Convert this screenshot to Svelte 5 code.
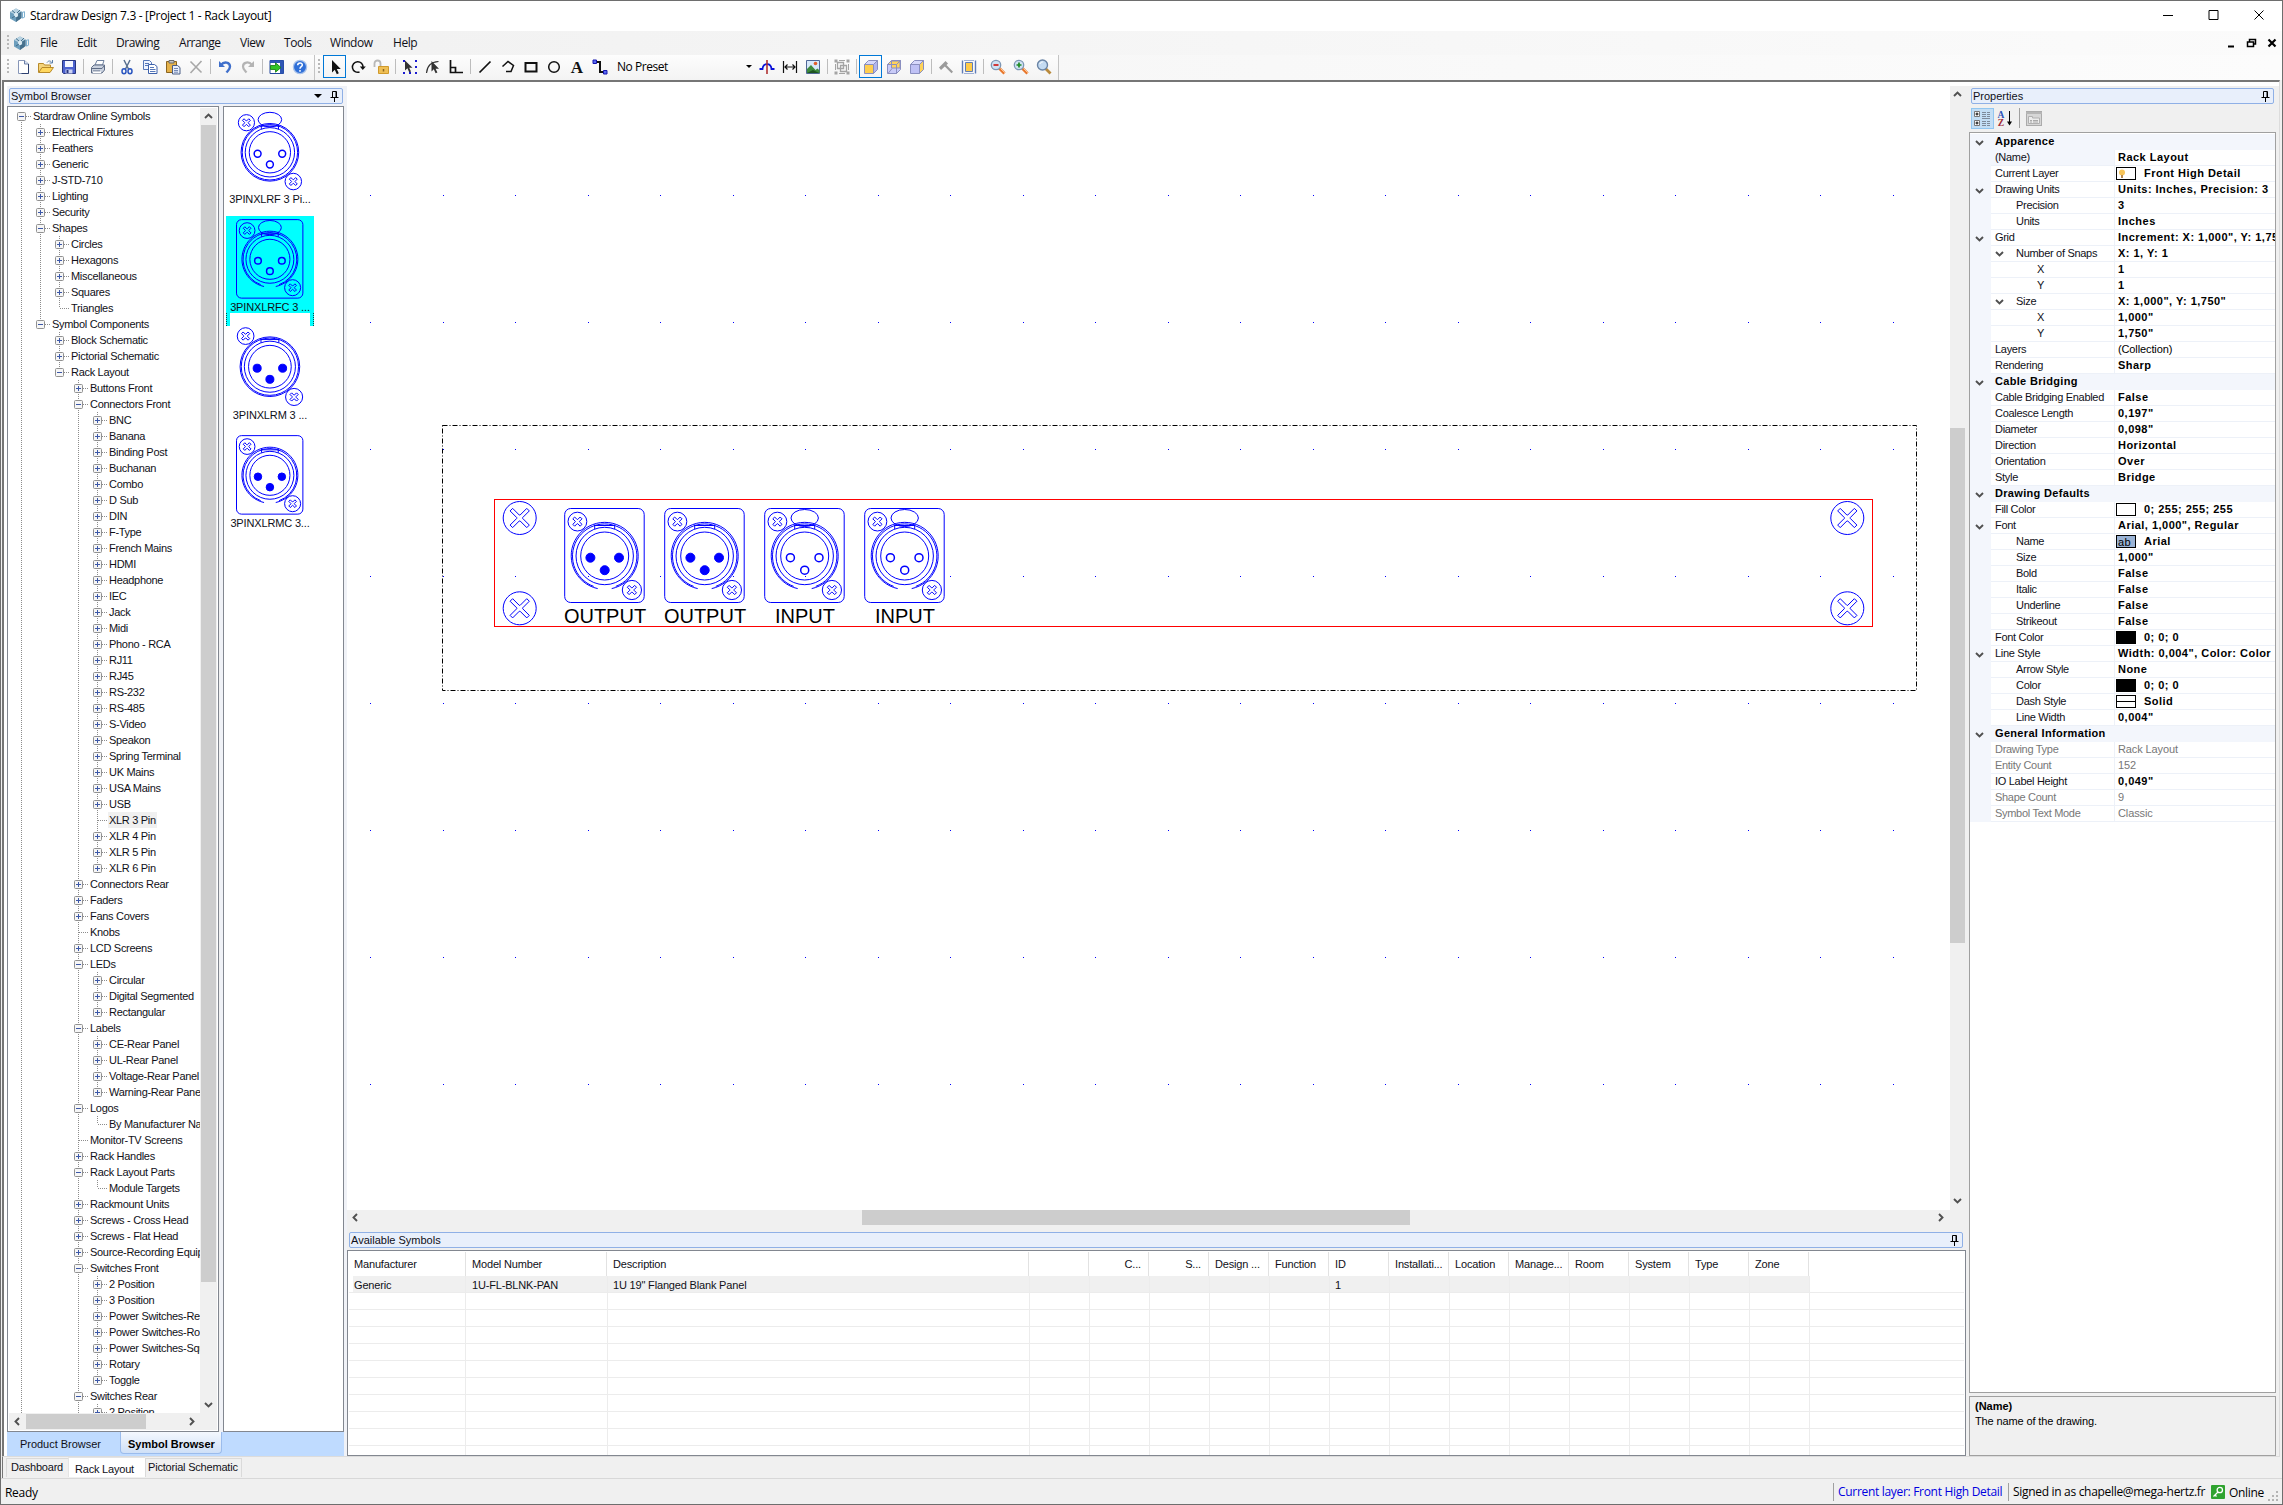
<script>
  // Tree source: leading digit is the depth, then the state (+ collapsed, - expanded, . leaf)
  const treeSource = `0-Stardraw Online Symbols
1+Electrical Fixtures
1+Feathers
1+Generic
1+J-STD-710
1+Lighting
1+Security
1-Shapes
2+Circles
2+Hexagons
2+Miscellaneous
2+Squares
2.Triangles
1-Symbol Components
2+Block Schematic
2+Pictorial Schematic
2-Rack Layout
3+Buttons Front
3-Connectors Front
4+BNC
4+Banana
4+Binding Post
4+Buchanan
4+Combo
4+D Sub
4+DIN
4+F-Type
4+French Mains
4+HDMI
4+Headphone
4+IEC
4+Jack
4+Midi
4+Phono - RCA
4+RJ11
4+RJ45
4+RS-232
4+RS-485
4+S-Video
4+Speakon
4+Spring Terminal
4+UK Mains
4+USA Mains
4+USB
4.XLR 3 Pin
4+XLR 4 Pin
4+XLR 5 Pin
4+XLR 6 Pin
3+Connectors Rear
3+Faders
3+Fans Covers
3.Knobs
3+LCD Screens
3-LEDs
4+Circular
4+Digital Segmented
4+Rectangular
3-Labels
4+CE-Rear Panel
4+UL-Rear Panel
4+Voltage-Rear Panel
4+Warning-Rear Panel
3-Logos
4.By Manufacturer Name
3.Monitor-TV Screens
3+Rack Handles
3-Rack Layout Parts
4.Module Targets
3+Rackmount Units
3+Screws - Cross Head
3+Screws - Flat Head
3+Source-Recording Equipment
3-Switches Front
4+2 Position
4+3 Position
4+Power Switches-Rectangular
4+Power Switches-Round
4+Power Switches-Square
4+Rotary
4+Toggle
3-Switches Rear
4+2 Position`;

  const parsed = treeSource.split('\n').map((s) => ({ depth: +s[0], state: s[1], label: s.slice(2) }));
  // Levels whose branches go on below the visible part of the tree
  const openEnded = [0, 3];

  function hasNext(i, level) {
    for (let j = i + 1; j < parsed.length; j++) {
      if (parsed[j].depth < level) return false;
      if (parsed[j].depth === level) return true;
    }
    return openEnded.includes(level);
  }

  const tree = parsed.map((row, i) => {
    const guides = [];
    for (let l = 0; l <= row.depth; l++) {
      const more = hasNext(i, l);
      if (l < row.depth) guides.push(more ? 'full' : 'none');
      else if (i === 0) guides.push('lower');
      else guides.push(more ? 'full' : 'upper');
    }
    return { ...row, guides };
  });

  const menus = [
    ['File', 37], ['Edit', 39], ['Drawing', 63], ['Arrange', 61], ['View', 44], ['Tools', 46], ['Window', 63], ['Help', 40]
  ];

  const standardTools = ['new', 'open', 'save', '|', 'print', '|', 'cut', 'copy', 'paste', 'delete', '|', 'undo', 'redo', '|', 'go', 'help'];
  const drawTools = ['cursor', 'rotate', 'lock', '|', 'marquee', 'node', 'angle', '|', 'line', 'poly', 'rect', 'circle', 'text', 'connector'];
  const viewTools = ['bridge', 'dimension', 'image', '|', 'group', '|', 'cubeFront', 'cubeMid', 'cubeRear', '|', 'hammer', 'frame', '|', 'zoomOut', 'zoomIn', 'zoom'];
  const active = ['cursor', 'cubeFront'];

  const lens = '<path d="M9 9 14.500 14.500" stroke="#e8762c" stroke-width="3"/><path d="M10.500 9.500 14.800 13.800" stroke="#ffd0a0" stroke-width=".9"/><circle cx="6" cy="6" r="4.700" fill="#cfe2f4" stroke="#7d97b5" stroke-width="1.300"/>';
  const cube = (front, top, side) =>
    `<path d="M1.500 5.500h9v9h-9z" fill="${front}" stroke="#8a8fc0"/><path d="M1.500 5.500 5.500 1.500h9l-4 4z" fill="${top}" stroke="#8a8fc0"/><path d="M10.500 5.500l4-4v9l-4 4z" fill="${side}" stroke="#8a8fc0"/>`;

  const icons = {
    app: '<path d="M1 5 7 1.500 12.500 4.500V11L7 15 1 11.500z" fill="#6c9ebd"/><path d="M1 5 7 1.500 12.500 4.500 7 8z" fill="#b9d3e2"/><path d="M7 8 12.500 4.500V11L7 15z" fill="#47728e"/><circle cx="7" cy="8" r="2.200" fill="#dcebf3"/><path d="M3 3.500 6 6M11 3l-3 3M3 11l3-2M8 10l3 2" stroke="#3a6783" stroke-width=".9"/><path d="M13.500 5v6M13 5.500l2.500-.8v5.500l-2.200 1" stroke="#7fb2d2" fill="none"/>',
    new: '<path d="M3.500 1.500h6l4 3.500v9.500h-10z" fill="#fff" stroke="#8796b8"/><path d="M9.500 1.500v3.500h4" fill="#dbe4f4" stroke="#6b7fa6"/><path d="M13.500 5v9.500h-7" fill="none" stroke="#2d4070"/>',
    open: '<path d="M.5 13.500V4.500h5l1 1.500h6v3" fill="#f4d47c" stroke="#b88a2a"/><path d="M.8 13.500 4 8.500h11.500l-3.500 5z" fill="#ffd75e" stroke="#b88a2a"/><path d="M9 3.500c1.500-2 3.500-2 4.800 0M14.500 1v3h-3" fill="none" stroke="#5b7fa8"/>',
    save: '<path d="M1.500 1.500h13v13h-12l-1-1z" fill="#4c62cf" stroke="#27357f"/><path d="M4 2h8v6H4z" fill="#f4f6ff"/><path d="M4.500 10.500h7v4h-7z" fill="#ccd3f3"/><path d="M5.500 11h2v3h-2z" fill="#27357f"/>',
    print: '<path d="M5 6 7 1.500h7L12.500 6z" fill="#fff" stroke="#6f82a0"/><path d="M1.500 8.500 4 6h10.500v5l-2.500 3h-10.500z" fill="#c9d1de" stroke="#5e6c86"/><path d="M1.500 9.500h10.500l2-2.500M3 12h7" fill="none" stroke="#5e6c86"/><path d="M3 12.500h8v1.500H3z" fill="#fff"/>',
    cut: '<path d="M5 1 9.500 10M11 1 6.500 10" stroke="#59708f" stroke-width="1.500"/><ellipse cx="5" cy="12.300" rx="2" ry="2.500" fill="none" stroke="#2a56c0" stroke-width="1.500"/><ellipse cx="11" cy="12.300" rx="2" ry="2.500" fill="none" stroke="#2a56c0" stroke-width="1.500"/>',
    copy: '<path d="M1.500 1.500h6l2 2v7h-8z" fill="#eef4ff" stroke="#5677b8"/><path d="M3 4.500h4M3 6.500h4" stroke="#5677b8"/><path d="M6.500 5.500h6l2.500 2v7h-8.500z" fill="#fff" stroke="#3d61ab"/><path d="M8 8.500h4M8 10.500h5.500M8 12.500h5.500" stroke="#5677b8"/>',
    paste: '<path d="M1.500 2.500h10v11h-10z" fill="#e5b24a" stroke="#8a6420"/><path d="M4 1.500h5v2.500H4z" fill="#c7c7c7" stroke="#6b6b6b"/><path d="M7.500 6.500h5l2.500 2v6.500H7.500z" fill="#e8effc" stroke="#4b5e86"/><path d="M9 9.500h4M9 11.500h4M9 13.200h4" stroke="#7589b5"/>',
    delete: '<path d="M2.500 2.500l11 11M13.500 2 2.500 14" stroke="#a8a8a8" stroke-width="1.600"/>',
    undo: '<path d="M2 2v6h6z" fill="#3f6fcb"/><path d="M4 6c3-4 9-3 9 1.500 0 3-2 4-3.500 6" fill="none" stroke="#3f6fcb" stroke-width="2.400"/>',
    redo: '<path d="M14 2v6H8z" fill="#b4b4b4"/><path d="M12 6C9 2 3 3 3 7.500c0 3 2 4 3.500 6" fill="none" stroke="#b4b4b4" stroke-width="2.200"/>',
    go: '<path d="M1 1.500h13.500v13H1z" fill="#fff" stroke="#23479c"/><path d="M1 1.500h13.500v2.500H1zM11 4h3.500v10.500H11z" fill="#2f56b5"/><path d="M1.500 6.500h5V3.800l5.500 4.700-5.500 4.700v-2.700h-5z" fill="#2fc322" stroke="#11780b" stroke-width=".8"/>',
    help: '<circle cx="8" cy="8" r="6.600" fill="#2f6fd8" stroke="#a9c2ea" stroke-width="1.300"/><path d="M5.700 6.200c0-3 4.800-3 4.600-.1-.1 1.600-2.300 1.600-2.300 3.600M8 11v1.700" fill="none" stroke="#fff" stroke-width="1.500"/>',
    cursor: '<path d="M5 1v12.500l2.800-2.800 2 4.500 2-1-2-4.200h4z" fill="#111"/>',
    rotate: '<path d="M13 8.500A5.300 5.300 0 1 0 9.500 13" fill="none" stroke="#111" stroke-width="1.500"/><path d="M9.800 7.500h6l-3 3.500z" fill="#111"/>',
    lock: '<path d="M1.500 8V4.500c0-4 6-4 6 0V8" fill="none" stroke="#b8b8b8" stroke-width="1.800"/><path d="M5.500 7.500h10v7h-10z" fill="#efbf55" stroke="#d09a2c"/><path d="M10.500 10v2.500" stroke="#8a6420" stroke-width="1.500"/>',
    marquee: '<path d="M3 1.500v10l2.400-2.200 1.800 4 1.800-.8-1.800-3.800h3.300z" fill="#333"/><path d="M1 1h2v2H1zM1 13h2v2H1zM13 1h2v2h-2zM13 13h2v2h-2zM13 7h2v2h-2zM7 13h2v2H7z" fill="#1a1ad0"/>',
    node: '<path d="M1.500 14C2 8 5 3 13.500 2.500" fill="none" stroke="#333" stroke-width="1.200"/><path d="M6.500 2v10.500l2.300-2.200 1.800 4 1.800-.8-1.800-3.800h3.400z" fill="#333"/>',
    angle: '<path d="M2.500 1v12.500h12.500M2.500 8.500h5v5" fill="none" stroke="#111" stroke-width="1.700"/>',
    line: '<path d="M2.500 13.500l11-11" stroke="#111" stroke-width="1.700"/>',
    poly: '<path d="M2.500 7.500 8 2.500l5.500 4L11 12.500H6" fill="none" stroke="#111" stroke-width="1.500"/>',
    rect: '<path d="M2.500 4h11v8.500h-11z" fill="none" stroke="#111" stroke-width="2"/>',
    circle: '<circle cx="8" cy="8" r="5.300" fill="none" stroke="#111" stroke-width="1.500"/>',
    text: '<text x="8" y="13.500" text-anchor="middle" font-family="Liberation Serif, serif" font-weight="700" font-size="17" letter-spacing="0" fill="#111">A</text>',
    connector: '<path d="M3 3h5v10h5" fill="none" stroke="#111" stroke-width="2"/><path d="M1 1h3.500v3.500H1zM11.500 11.500H15V15h-3.500z" fill="#5a6cf0" stroke="#1414b0"/>',
    bridge: '<path d="M.5 10h3C4 3.500 12 3.500 12.500 10h3" fill="none" stroke="#0a10d8" stroke-width="1.800"/><path d="M8 1v14" stroke="#b03030" stroke-width="1.600"/>',
    dimension: '<path d="M1.500 2v12M14.500 2v12M3 8h10M5.500 5.500 3 8l2.500 2.500M10.500 5.500 13 8l-2.500 2.500" fill="none" stroke="#111" stroke-width="1.200"/>',
    image: '<path d="M1.500 1.500h13v13h-13z" fill="#d7e8fa" stroke="#4f6796"/><path d="M2 14V10l4-4 4.500 5 2-1.500 2 2V14z" fill="#3d8a3d"/><circle cx="10.500" cy="4.500" r="1.800" fill="#e0602c"/><path d="M2 14l6-3 6 3z" fill="#1d5320"/>',
    group: '<path d="M3.500 3.500h6v6h-6zM6.500 6.500h6v6h-6z" fill="none" stroke="#a4a4a4" stroke-width="1.300"/><path d="M.5.500h3v3h-3zM12.500.500h3v3h-3zM.5 12.500h3v3h-3zM12.500 12.500h3v3h-3z" fill="#a4a4a4"/><path d="M5 1.500h6M5 14.500h6M1.500 5v6M14.500 5v6" stroke="#a4a4a4"/>',
    cubeFront: cube('#ffce4f', '#d7d8fb', '#b3b5ee'),
    cubeMid: cube('#c9cbf8', '#ffd764', '#c9cbf8') + '<path d="M5.500 2h8.500v7H5.500z" fill="#ffd35a" stroke="#8a8fc0"/><path d="M2 14.500l4-5" stroke="#8a8fc0"/><path d="M1.500 5.500h9v9M10.500 5.500l4-4" fill="none" stroke="#8a8fc0"/>',
    cubeRear: cube('#bfc1f5', '#d7d8fb', '#ffd35a'),
    hammer: '<path d="M1 8.500 7.500 2 10 4.500 8.500 6 15 12.800 13.500 14.300 6.800 7.500 3 11z" fill="#9b9b9b"/>',
    frame: '<path d="M1.500 1.500v13M14.500 1.500v13" stroke="#5f7cb8" stroke-width="1.400"/><path d="M4.500 3.500h7v9h-7z" fill="#ffcb47" stroke="#5f7cb8"/><path d="M3 1.500h10M3 14.500h10" stroke="#9fb0d4"/>',
    zoomOut: lens + '<path d="M3.500 6h5" stroke="#d02525" stroke-width="1.800"/>',
    zoomIn: lens + '<path d="M3.500 6h5M6 3.500v5" stroke="#1e8b22" stroke-width="1.700"/>',
    zoom: '<path d="M9.500 9.500 14.500 14.500" stroke="#b98a3c" stroke-width="2.800"/><circle cx="6.500" cy="6" r="5" fill="#c4dbf2" stroke="#6a84a5" stroke-width="1.400"/><path d="M3.800 5c.5-1.500 1.800-2 3-2" stroke="#fff" fill="none"/>'
  };

  const thumbs = [
    { label: '3PINXLRF 3 Pi...', female: true, plate: false, scale: 0.86, cy: 46.3 },
    { label: '3PINXLRFC 3 ...', female: true, plate: true, scale: 0.835, cy: 45.3, selected: true },
    { label: '3PINXLRM 3 ...', female: false, plate: false, scale: 0.89, cy: 44.7 },
    { label: '3PINXLRMC 3...', female: false, plate: true, scale: 0.835, cy: 45.3 }
  ];

  const connectors = [
    { x: 564.5, label: 'OUTPUT', female: false },
    { x: 664.5, label: 'OUTPUT', female: false },
    { x: 764.5, label: 'INPUT', female: true },
    { x: 864.5, label: 'INPUT', female: true }
  ];

  const dots = [];
  for (let r = 0; r < 8; r++) for (let c = 0; c < 22; c++) dots.push([Math.floor(370.5 + c * 72.5), 195 + r * 127]);

  const screws = [[519.7, 518], [519.7, 608.3], [1847.3, 518], [1847.3, 608.3]];

  const columns = [
    ['Manufacturer', 117, 'Generic'], ['Model Number', 141, '1U-FL-BLNK-PAN'], ['Description', 422, '1U 19" Flanged Blank Panel'],
    ['', 60], ['C...', 60, '', true], ['S...', 60, '', true], ['Design ...', 60], ['Function', 60], ['ID', 60, '1'],
    ['Installati...', 60], ['Location', 60], ['Manage...', 60], ['Room', 60], ['System', 60], ['Type', 60], ['Zone', 60]
  ];

  // [kind, label, value, options]; kind c = category, otherwise the nesting depth
  const props = [
    ['c', 'Apparence'],
    [0, '(Name)', 'Rack Layout', { current: true }],
    [0, 'Current Layer', 'Front High Detail', { swatch: 'bulb' }],
    [0, 'Drawing Units', 'Units: Inches, Precision: 3', { open: true }],
    [1, 'Precision', '3'],
    [1, 'Units', 'Inches'],
    [0, 'Grid', 'Increment: X: 1,000", Y: 1,750"', { open: true }],
    [1, 'Number of Snaps', 'X: 1, Y: 1', { open: true }],
    [2, 'X', '1'],
    [2, 'Y', '1'],
    [1, 'Size', 'X: 1,000", Y: 1,750"', { open: true }],
    [2, 'X', '1,000"'],
    [2, 'Y', '1,750"'],
    [0, 'Layers', '(Collection)', { plain: true }],
    [0, 'Rendering', 'Sharp'],
    ['c', 'Cable Bridging'],
    [0, 'Cable Bridging Enabled', 'False'],
    [0, 'Coalesce Length', '0,197"'],
    [0, 'Diameter', '0,098"'],
    [0, 'Direction', 'Horizontal'],
    [0, 'Orientation', 'Over'],
    [0, 'Style', 'Bridge'],
    ['c', 'Drawing Defaults'],
    [0, 'Fill Color', '0; 255; 255; 255', { swatch: 'white' }],
    [0, 'Font', 'Arial, 1,000", Regular', { open: true }],
    [1, 'Name', 'Arial', { swatch: 'ab' }],
    [1, 'Size', '1,000"'],
    [1, 'Bold', 'False'],
    [1, 'Italic', 'False'],
    [1, 'Underline', 'False'],
    [1, 'Strikeout', 'False'],
    [0, 'Font Color', '0; 0; 0', { swatch: 'black' }],
    [0, 'Line Style', 'Width: 0,004", Color: Color', { open: true }],
    [1, 'Arrow Style', 'None'],
    [1, 'Color', '0; 0; 0', { swatch: 'black' }],
    [1, 'Dash Style', 'Solid', { swatch: 'dash' }],
    [1, 'Line Width', '0,004"'],
    ['c', 'General Information'],
    [0, 'Drawing Type', 'Rack Layout', { muted: true }],
    [0, 'Entity Count', '152', { muted: true }],
    [0, 'IO Label Height', '0,049"'],
    [0, 'Shape Count', '9', { muted: true }],
    [0, 'Symbol Text Mode', 'Classic', { muted: true }]
  ].map(([kind, label, value, o = {}]) => ({ kind, label, value, ...o }));
</script>

{#snippet icon(name)}
  <svg class="icon" viewBox="0 0 16 16" width="16" height="16">{@html icons[name]}</svg>
{/snippet}

{#snippet tools(list)}
  {#each list as name}
    {#if name === '|'}
      <i class="sep"></i>
    {:else}
      <button class="tool" class:active={active.includes(name)} aria-label={name}>{@render icon(name)}</button>
    {/if}
  {/each}
{/snippet}

{#snippet pin()}
  <svg class="pin" viewBox="0 0 9 11" width="9" height="11"><path d="M2.500 6V.500h4V6M.500 6.500h8M4.500 7v4" fill="none" stroke="#000" /><path d="M6 1v5" stroke="#000" /></svg>
{/snippet}

{#snippet chevron(turn)}
  <svg class="chev {turn}" viewBox="0 0 9 9" width="9" height="9"><path d="M1 3 4.500 6.500 8 3" fill="none" stroke="#505050" stroke-width="1.900" /></svg>
{/snippet}

{#snippet screw(x, y, r, arm, w)}
  <g transform="translate({x} {y})">
    <circle {r} />
    <path
      transform="rotate(45)"
      d="M{-w} {-arm}H{w}V{-w * 1.3}L{w * 1.3} {-w}H{arm}V{w}H{w * 1.3}L{w} {w * 1.3}V{arm}H{-w}V{w * 1.3}L{-w * 1.3} {w}H{-arm}V{-w}H{-w * 1.3}L{-w} {-w * 1.3}z"
    />
  </g>
{/snippet}

{#snippet xlr(x, y, scale, female, plate)}
  <g class="xlr" transform="translate({x} {y}) scale({scale})">
    {#if plate}<rect x="-40" y="-47.500" width="79.500" height="94" rx="6" />{/if}
    {@render screw(-27.3, -34.4, 9.4, 5.2, 1.3)}
    {@render screw(27.2, 34, 9.6, 5.2, 1.3)}
    {#if plate}
      <path d="M-7 32.600A33.500 33.500 0 1 1 7 32.600" />
      <path d="M-11 30.400A32.200 32.200 0 1 1 11 30.400" />
    {:else}
      <circle r="33.500" />
      <circle r="32.200" />
    {/if}
    <circle r="28.700" />
    <circle r="24" />
    <path d="M-10-31.500v4.500M10-31.500v4.500M-10-30.500H10" />
    {#if female}
      <ellipse cx="0" cy="-38" rx="13.700" ry="8.500" />
    {/if}
    {#each [[-14.3, 1.7], [14.3, 1.7], [0, 14.2]] as [px, py]}
      <circle class={female ? 'socket' : 'contact'} cx={px} cy={py} r={female ? 4 : 4.5} />
    {/each}
  </g>
{/snippet}

<div class="window">
  <header class="titlebar">
    {@render icon('app')}
    <span class="ui title">Stardraw Design 7.3 - [Project 1 - Rack Layout]</span>
    <svg class="caption" viewBox="0 0 104 12" width="104" height="12">
      <path d="M0 6.500h10M46 1.500h9v9h-9zM91.500 1.500l9 9M100.500 1.500l-9 9" fill="none" stroke="#000" />
    </svg>
  </header>

  <nav class="menubar">
    <i class="grip"></i>
    {@render icon('app')}
    <div class="menus ui">
      {#each menus as [name, width]}
        <span style:width="{width}px">{name}</span>
      {/each}
    </div>
    <svg class="child" viewBox="0 0 50 12" width="50" height="12">
      <path d="M1 9.500h6" stroke="#000" stroke-width="2" />
      <path d="M20.500 5h6v4.500h-6zM22.500 5V2.500h6v4.500h-2" fill="none" stroke="#000" stroke-width="1.500" />
      <path d="M41.500 2.500l7 7M48.500 2.500l-7 7" stroke="#000" stroke-width="2.200" />
    </svg>
  </nav>

  <div class="toolbar">
    <div class="strip">
      <i class="grip"></i>
      {@render tools(standardTools)}
    </div>
    <div class="strip second">
      <i class="grip"></i>
      {@render tools(drawTools)}
      <span class="preset ui">No Preset<i class="drop"></i></span>
      {@render tools(viewTools)}
    </div>
  </div>

  <main class="workspace">
    <aside class="browser">
      <div class="panel-head"><span>Symbol Browser</span><i class="drop big"></i>{@render pin()}</div>
      <div class="panes">
        <div class="tree-box">
          <div class="tree">
            {#each tree as row}
              <div class="node">
                {#each row.guides as g, l}
                  <i class="guide {g}">
                    {#if l === row.depth}
                      <b class="stub"></b>
                      {#if row.state !== '.'}
                        <svg class="box" viewBox="0 0 9 9" width="9" height="9">
                          <rect x=".5" y=".5" width="8" height="8" rx="1" fill="#f6f6f6" stroke="#919191" />
                          <path d={row.state === '+' ? 'M2 4.500h5M4.500 2v5' : 'M2 4.500h5'} stroke="#3c58a8" />
                        </svg>
                      {/if}
                    {/if}
                  </i>
                {/each}
                <span class:chosen={row.label === 'XLR 3 Pin'}>{row.label}</span>
              </div>
            {/each}
          </div>
          <div class="vbar">
            {@render chevron('up')}
            <i class="thumb"></i>
            {@render chevron('down')}
          </div>
          <div class="hbar">
            {@render chevron('left')}
            <i class="thumb"></i>
            {@render chevron('right')}
          </div>
        </div>
        <div class="thumbs">
          {#each thumbs as t}
            <figure class:selected={t.selected}>
              <svg viewBox="0 0 88 84" width="88" height="84">{@render xlr(43.9, t.cy - 2, t.scale, t.female, t.plate)}</svg>
              <figcaption>{t.label}</figcaption>
            </figure>
          {/each}
        </div>
      </div>
      <div class="dock-tabs">
        <span class="dock">Product Browser</span>
        <span class="dock on">Symbol Browser</span>
      </div>
    </aside>

    <section class="center">
      <div class="canvas-row">
        <svg class="canvas" viewBox="347 82 1603 1128" width="1603" height="1128">
          <g fill="#0000ff">
            {#each dots as [x, y]}<rect {x} {y} width="1" height="1" />{/each}
          </g>
          <rect x="442.500" y="425.500" width="1474" height="265" fill="none" stroke="#000" stroke-dasharray="5 2 1 2" />
          <rect x="494.500" y="499.500" width="1378" height="127" fill="none" stroke="#ff0000" />
          <g class="xlr">
            {#each screws as [x, y]}{@render screw(x, y, 16.5, 11.8, 1.8)}{/each}
          </g>
          {#each connectors as c}
            {@render xlr(c.x + 40.2, 556, 1, c.female, true)}
            <text class="io" x={c.x + 40.5} y="623.200">{c.label}</text>
          {/each}
        </svg>
        <div class="cv-bar">
          {@render chevron('up')}
          <i class="thumb"></i>
          {@render chevron('down')}
        </div>
      </div>
      <div class="ch-bar">
        {@render chevron('left')}
        <i class="thumb"></i>
        {@render chevron('right')}
      </div>
      <div class="panel-head available"><span>Available Symbols</span>{@render pin()}</div>
      <div class="table">
        <div class="thead">
          {#each columns as [name, width, , right]}
            <span class:right style:width="{width}px">{name}</span>
          {/each}
        </div>
        <div class="trow filled">
          {#each columns as [, width, value]}
            <span style:width="{width}px">{value ?? ''}</span>
          {/each}
        </div>
        {#each { length: 10 } as _, i}
          <div class="trow">
            {#each columns as [, width]}<span style:width="{width}px"></span>{/each}
          </div>
        {/each}
      </div>
    </section>

    <aside class="properties">
      <div class="panel-head"><span>Properties</span>{@render pin()}</div>
      <div class="prop-tools">
        <button class="ptool on" aria-label="Categorized">
          <svg viewBox="0 0 17 17" width="17" height="17">
            <path d="M.5 1.500h5v5h-5zM.5 10.500h5v5h-5z" fill="#fff" stroke="#777" />
            <path d="M1.500 4h3M3 2.500v3M1.500 13h3M3 11.500v3" stroke="#000" />
            <path d="M8 2.500h4M13 2.500h3M8 4.500h4M13 4.500h3M8 6.500h4M13 6.500h3M8 8.500h8M8 11.500h4M13 11.500h3M8 13.500h4M13 13.500h3M8 15.500h4M13 15.500h3" stroke="#7d8a9a" />
          </svg>
        </button>
        <button class="ptool" aria-label="Alphabetical">
          <svg viewBox="0 0 17 17" width="17" height="17">
            <text x="4" y="7.500" text-anchor="middle" font-family="Liberation Serif, serif" font-weight="700" font-size="9.500" fill="#2c53b8">A</text>
            <text x="4" y="16" text-anchor="middle" font-family="Liberation Serif, serif" font-weight="700" font-size="9.500" fill="#a02c38">Z</text>
            <path d="M12.500 1v12" stroke="#000" /><path d="M10 11.500h5l-2.500 4z" />
          </svg>
        </button>
        <i class="psep"></i>
        <svg class="pages" viewBox="0 0 16 15" width="16" height="15">
          <rect x=".5" y=".5" width="15" height="14" fill="#d6d6d6" stroke="#ababab" />
          <path d="M0 2h16" stroke="#b5b5b5" stroke-width="2" />
          <path d="M2.500 12.500v-7h4v1.500h7v5.500z" fill="#ececec" stroke="#b0b0b0" />
          <path d="M4 9.500h2M7 9.500h5M4 11h2M7 11h5" stroke="#a8a8a8" />
        </svg>
      </div>
      <div class="grid">
        {#each props as p}
          {#if p.kind === 'c'}
            <div class="prow cat">
              <span class="gutter">{@render chevron('down')}</span>
              <b>{p.label}</b>
            </div>
          {:else}
            <div class="prow d{p.kind}" class:muted={p.muted} class:current={p.current}>
              <span class="gutter">{#if p.open && p.kind === 0}{@render chevron('down')}{/if}</span>
              <span class="key">
                {#if p.open && p.kind === 1}{@render chevron('down')}{/if}{p.label}
              </span>
              <span class="val" class:plain={p.plain || p.muted}>
                {#if p.swatch}
                  <i class="swatch {p.swatch}">
                    {#if p.swatch === 'ab'}ab{/if}
                    {#if p.swatch === 'bulb'}
                      <svg viewBox="0 0 8 10" width="8" height="10"><circle cx="4" cy="3.500" r="3" fill="#f7c55a" /><path d="M3 6h2v3H3z" fill="#b98a50" /></svg>
                    {/if}
                  </i>
                {/if}{p.value}
              </span>
            </div>
          {/if}
        {/each}
      </div>
      <div class="hint">
        <b>(Name)</b>
        <span>The name of the drawing.</span>
      </div>
    </aside>
  </main>

  <div class="doc-tabs">
    <span class="doc">Dashboard</span>
    <span class="doc on">Rack Layout</span>
    <span class="doc last">Pictorial Schematic</span>
  </div>

  <footer class="status ui">
    <span class="ready">Ready</span>
    <span class="cell layer">Current layer: Front High Detail</span>
    <span class="cell user">Signed in as chapelle@mega-hertz.fr</span>
    <svg viewBox="0 0 14 14" width="14" height="14">
      <rect width="14" height="14" rx="1" fill="#2fa32f" />
      <circle cx="8.800" cy="5" r="2.700" fill="none" stroke="#fff" stroke-width="1.300" />
      <path d="M7 7 2.500 11.500M4 10l1.500 1.500" stroke="#fff" stroke-width="1.300" />
    </svg>
    <span class="online">Online</span>
    <svg class="sizer" viewBox="0 0 11 11" width="11" height="11">
      <path d="M8 0h2v2H8zM8 4h2v2H8zM4 4h2v2H4zM8 8h2v2H8zM4 8h2v2H4zM0 8h2v2H0z" fill="#b4b4b4" />
    </svg>
  </footer>
</div>

<style>
  :global(body) {
    margin: 0;
    overflow: hidden;
  }

  .window,
  .window :global(*) {
    box-sizing: border-box;
  }

  .window {
    display: flex;
    flex-direction: column;
    width: 2283px;
    height: 1505px;
    border: 1px solid #6e6e6e;
    background: #f0f0f0;
    color: #101018;
    font-family: 'Liberation Sans', Arial, sans-serif;
    font-size: 11px;
    letter-spacing: -0.3px;
    white-space: nowrap;
  }

  .ui {
    font-family: 'Open Sans', 'Noto Sans', sans-serif;
    font-size: 12px;
    letter-spacing: -0.45px;
  }

  svg {
    display: block;
    flex: none;
  }

  button {
    padding: 0;
    border: 1px solid transparent;
    background: none;
  }

  .titlebar {
    display: flex;
    flex: none;
    align-items: center;
    height: 30px;
    padding: 0 0 2px 8px;
    background: #fff;
    color: #000;
  }

  .title {
    margin-left: 5px;
    flex: 1;
    letter-spacing: -0.31px;
  }

  .caption {
    margin-right: 15px;
  }

  .menubar {
    display: flex;
    flex: none;
    align-items: center;
    height: 24px;
    padding-bottom: 1px;
    background: linear-gradient(90deg, #f0f0f0, #fbfbfb);
  }

  .grip {
    width: 2px;
    height: 15px;
    margin: 0 0 0 6px;
    background: repeating-linear-gradient(#b8b8b8 0 2px, transparent 2px 4px);
  }

  .menubar .icon {
    margin-left: 4px;
  }

  .menus {
    display: flex;
    flex: 1;
    margin-left: 11px;
  }

  .child {
    margin-right: 5px;
  }

  .toolbar {
    display: flex;
    flex: none;
    height: 25px;
    background: linear-gradient(90deg, #f3f3f3, #fcfcfc);
  }

  .strip {
    display: flex;
    align-items: center;
    width: 314px;
    padding-bottom: 2px;
    border-right: 1px solid #c4c4c4;
    background: linear-gradient(#fdfdfd, #f3f3f3);
  }

  .strip .grip {
    margin-right: 2px;
  }

  .second {
    width: 744px;
  }

  .second .grip {
    margin: 0 3px 0 3px;
  }

  .tool {
    display: grid;
    flex: none;
    place-items: center;
    width: 23px;
    height: 23px;
  }

  .tool.active {
    border-color: #0078d7;
  }

  .sep {
    flex: none;
    width: 1px;
    height: 15px;
    margin: 0 2px 0 3px;
    background: #bdbdbd;
  }

  .preset {
    display: flex;
    flex: none;
    align-items: center;
    justify-content: space-between;
    width: 144px;
    padding: 0 3px 0 6px;
    color: #000;
  }

  .drop {
    border: 3px solid transparent;
    border-top-color: #000;
    border-bottom: 0;
  }

  .drop.big {
    margin-right: 8px;
    border-width: 4px 4px 0;
  }

  .workspace {
    display: flex;
    flex: none;
    height: 1376px;
    margin: 0 2px 0 1px;
    padding-top: 4px;
    border-top: 2px solid #767676;
    border-left: 2px solid #767676;
    border-right: 1px solid #dcdcdc;
    background: #f0f0f0;
    box-shadow: inset 0 4px #fff;
  }

  .browser {
    flex: none;
    width: 343px;
    padding: 2px 5px 0 3px;
    background: #f0f2f7;
    box-shadow: inset 3px 0 #fff;
  }

  .panel-head {
    display: flex;
    align-items: center;
    height: 16px;
    margin-left: 2px;
    padding: 0 3px 0 1px;
    border: 1px solid #8fb0e6;
    border-radius: 2px;
    background: #e8effb;
    letter-spacing: 0;
  }

  .panel-head span {
    flex: 1;
  }

  .browser .panel-head {
    width: 334px;
  }

  .panes {
    display: flex;
    justify-content: space-between;
    height: 1326px;
    margin-top: 2px;
    width: 337px;
  }

  .tree-box {
    display: grid;
    grid-template: 1305px 17px / 191px 17px;
    width: 212px;
    padding: 1px;
    border: 1px solid #828790;
    background: #fff;
    box-shadow: 1px 0 #f0f0f0;
  }

  .tree {
    overflow: hidden;
  }

  .node {
    display: flex;
    height: 16px;
    padding-left: 3px;
    line-height: 17px;
  }

  .node span {
    margin-left: 1px;
    padding: 0 1px;
  }

  .node .chosen {
    background: #f0f0f0;
  }

  .guide {
    position: relative;
    display: flex;
    flex: none;
    align-items: center;
    width: 19px;
    background: repeating-linear-gradient(#8c8c8c 0 1px, transparent 1px 2px) 9px 0 / 1px 100% no-repeat;
  }

  .guide.none {
    background: none;
  }

  .guide.upper {
    background-size: 1px 8px;
  }

  .guide.lower {
    background-size: 1px 8px;
    background-position: 9px 8px;
  }

  .stub {
    width: 9px;
    height: 1px;
    margin-left: 10px;
    background: repeating-linear-gradient(90deg, #8c8c8c 0 1px, transparent 1px 2px);
  }

  .box {
    position: absolute;
    left: 5px;
    top: 4px;
  }

  .vbar {
    display: flex;
    flex-direction: column;
    align-items: center;
    justify-content: space-between;
    padding: 4px 0;
    background: #f0f0f0;
  }

  .thumb {
    background: #cdcdcd;
  }

  .vbar .thumb {
    width: 15px;
    height: 1157px;
    margin: 0 0 auto;
  }

  .vbar .chev:first-child {
    margin-bottom: 4px;
  }

  .hbar {
    display: flex;
    grid-column: 1 / -1;
    align-items: center;
    padding: 1px 21px 1px 4px;
    background: #f0f0f0;
  }

  .hbar .thumb {
    width: 120px;
    height: 15px;
    margin: 0 auto 0 4px;
  }

  .left {
    transform: rotate(90deg);
  }

  .right.chev {
    transform: rotate(-90deg);
  }

  .up {
    transform: rotate(180deg);
  }

  .thumbs {
    width: 121px;
    padding: 1px 0 0 2px;
    border: 1px solid #828790;
    background: #fff;
  }

  figure {
    display: flex;
    flex-direction: column;
    align-items: center;
    width: 88px;
    height: 97px;
    margin: 0 0 11px;
  }

  figure.selected {
    height: 110px;
    margin-bottom: -2px;
    background:
      repeating-linear-gradient(#004c4c 0 1px, transparent 1px 2px) 0 97px / 1px 13px no-repeat,
      repeating-linear-gradient(#004c4c 0 1px, transparent 1px 2px) 87px 97px / 1px 13px no-repeat,
      linear-gradient(#fff, #fff) 4px 97px / 80px 13px no-repeat,
      #00ffff;
  }

  figcaption {
    line-height: 14px;
    letter-spacing: -0.15px;
  }

  .xlr {
    fill: none;
    stroke: #0000ff;
    stroke-width: 1;
  }

  .xlr :global(*) {
    vector-effect: non-scaling-stroke;
  }

  .xlr :global(.contact) {
    fill: #0000ff;
  }

  .xlr :global(.socket) {
    stroke-width: 1.500;
  }

  .dock-tabs {
    display: flex;
    width: 337px;
    height: 24px;
    background: #bfdbff;
  }

  .dock {
    width: 113px;
    padding-left: 13px;
    line-height: 25px;
    letter-spacing: -0.03px;
  }

  .dock.on {
    width: 102px;
    height: 22px;
    padding-left: 7px;
    border: 1px solid #9bbcec;
    border-top: 0;
    border-radius: 0 0 4px 4px;
    background: linear-gradient(#f4f8fe, #cfe0f7);
    color: #000;
    font-weight: 700;
    letter-spacing: 0;
  }

  .center {
    flex: none;
    width: 1619px;
  }

  .canvas-row {
    display: flex;
    height: 1124px;
    align-items: stretch;
  }

  .canvas {
    margin-top: -4px;
    background: #fff;
  }

  .io {
    fill: #000;
    font-size: 20px;
    letter-spacing: 0;
    text-anchor: middle;
  }

  .cv-bar {
    display: flex;
    flex-direction: column;
    align-items: center;
    width: 15px;
    padding: 4px 0 5px;
  }

  .cv-bar .thumb {
    width: 15px;
    height: 515px;
    margin: 329px 0 auto;
  }

  .ch-bar {
    display: flex;
    align-items: center;
    width: 1603px;
    height: 15px;
    padding: 0 5px 0 4px;
  }

  .ch-bar .thumb {
    width: 548px;
    height: 15px;
    margin: 0 auto 0 502px;
  }

  .available {
    width: 1614px;
    margin-top: 7px;
  }

  .table {
    display: flex;
    flex-direction: column;
    height: 206px;
    margin-top: 2px;
    padding: 1px 1px 2px;
    overflow: hidden;
    border: 1px solid #828790;
    background: #fff;
    letter-spacing: -0.17px;
  }

  .thead {
    display: flex;
    flex: none;
    height: 24px;
  }

  .thead span {
    flex: none;
    padding-left: 6px;
    border-right: 1px solid #e2e2e2;
    line-height: 25px;
  }

  .thead span.right {
    padding-right: 7px;
    text-align: right;
  }

  .thead span:first-child {
    padding-left: 5px;
  }

  .trow {
    display: flex;
    flex: none;
    height: 17px;
    border-bottom: 1px solid #ececec;
  }

  .trow span {
    flex: none;
    border-right: 1px solid #ececec;
    line-height: 18px;
    padding-left: 5px;
  }

  .trow span:first-child {
    margin-right: 1px;
  }

  .trow.filled {
    background: linear-gradient(#f0f0f0, #f0f0f0) 4px 0 / 1456px 17px no-repeat;
  }

  .trow:last-child {
    height: 10px;
    border: 0;
  }

  .properties {
    display: flex;
    flex-direction: column;
    width: 307px;
    margin-left: 3px;
    padding-top: 2px;
  }

  .properties .panel-head {
    width: 303px;
  }

  .prop-tools {
    display: flex;
    align-items: center;
    height: 28px;
    padding-left: 2px;
  }

  .ptool {
    display: grid;
    place-items: center;
    width: 23px;
    height: 21px;
    letter-spacing: 0;
  }

  .ptool.on {
    border-color: #92c6f0;
    background: #c3def5;
  }

  .psep {
    width: 1px;
    height: 20px;
    margin: 0 6px 0 2px;
    background: #a0a0a0;
  }

  .grid {
    height: 1261px;
    padding-top: 1px;
    border: 1px solid #a0a0a0;
    background: #fff;
    overflow: hidden;
  }

  .prow {
    display: flex;
    height: 16px;
    line-height: 15px;
  }

  .gutter {
    display: grid;
    flex: none;
    place-items: center;
    width: 21px;
    padding-right: 3px;
    background: #f3f6fc;
  }

  .key {
    display: flex;
    flex: none;
    align-items: center;
    width: 124px;
    padding-left: 4px;
    border-right: 1px solid #edf1f8;
    border-bottom: 1px solid #edf1f8;
  }

  .current .key {
    background: #f3f6fc;
  }

  .d1 .key {
    padding-left: 25px;
  }

  .d1 .key .chev {
    margin: 0 12px 0 -21px;
  }

  .d2 .key {
    padding-left: 46px;
  }

  .val {
    display: flex;
    flex: 1;
    align-items: center;
    min-width: 0;
    overflow: hidden;
    padding-left: 3px;
    border-bottom: 1px solid #edf1f8;
    color: #000;
    font-weight: 700;
    letter-spacing: 0.48px;
  }

  .val.plain {
    font-weight: 400;
    letter-spacing: -0.12px;
  }

  .muted .key,
  .muted .val {
    color: #777;
  }

  .cat {
    background: #f3f6fc;
  }

  .cat b {
    padding-left: 4px;
    color: #000;
    letter-spacing: 0.32px;
  }

  .swatch {
    display: flex;
    flex: none;
    align-items: center;
    width: 20px;
    height: 13px;
    margin: 0 8px 0 -2px;
    padding-left: 1px;
    border: 1px solid #000;
    font: 400 11px 'Liberation Sans', sans-serif;
  }

  .swatch.black {
    background: #000;
  }

  .swatch.ab {
    background: #9ab3d5;
  }

  .swatch.dash {
    background: linear-gradient(#000, #000) 0 5px / 100% 1px no-repeat;
  }

  .hint {
    display: flex;
    flex-direction: column;
    height: 60px;
    margin-top: 3px;
    padding: 2px 5px;
    border: 1px solid #a0a0a0;
    line-height: 15px;
  }

  .hint b {
    color: #000;
    letter-spacing: 0;
  }

  .hint span {
    color: #000;
    letter-spacing: -0.12px;
  }

  .doc-tabs {
    display: flex;
    flex: none;
    height: 22px;
    margin-right: 2px;
    margin-left: 1px;
    padding-left: 3px;
    border-top: 1px solid #dcdcdc;
    border-left: 1px solid #767676;
    letter-spacing: -0.2px;
  }

  .doc {
    width: 62px;
    height: 19px;
    margin-top: 1px;
    padding-left: 4px;
    border: 1px solid #dadada;
    border-width: 1px 0 0 1px;
    line-height: 16px;
  }

  .doc.on {
    width: 77px;
    height: 20px;
    margin-top: 0;
    padding-left: 6px;
    border-color: #e4e4e4;
    background: #fff;
    line-height: 22px;
  }

  .doc.last {
    width: 97px;
    padding-left: 2px;
    border-right-width: 1px;
  }

  .status {
    display: flex;
    flex: 1;
    align-items: center;
    padding: 1px 3px 0 4px;
    border-top: 1px solid #d8d8d8;
    color: #000;
    letter-spacing: -0.31px;
  }

  .ready {
    flex: 1;
  }

  .cell {
    height: 18px;
    padding-left: 4px;
    border-left: 1px solid #a0a0a0;
    line-height: 18px;
  }

  .layer {
    width: 175px;
    color: #0000e0;
  }

  .user {
    width: 203px;
  }

  .online {
    width: 39px;
    margin-left: 4px;
  }

  .sizer {
    margin: 8px 0 0 0;
  }
</style>
